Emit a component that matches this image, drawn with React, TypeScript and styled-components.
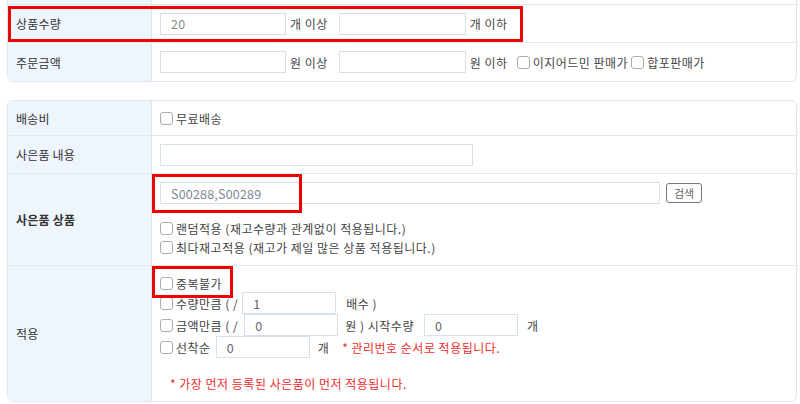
import React, { ReactElement, ReactNode } from 'react';
import styled, { createGlobalStyle } from 'styled-components';

const GlobalStyle = createGlobalStyle`
  html, body {
    margin: 0;
    padding: 0;
    background: #ffffff;
    font-family: "Noto Sans CJK KR", "Noto Sans", sans-serif;
    font-size: 12px;
    letter-spacing: 0.5px;
    color: #444444;
    overflow: hidden;
  }
`;

const Page = styled.div`
  margin-top: -34px;
  padding: 0 3px 0 7px;
  display: flex;
  flex-direction: column;
  gap: 18px;
`;

const Card = styled.div`
  border: 1px solid #e1e7ee;
  border-radius: 6px;
  overflow: hidden;
  background: #ffffff;
`;

const Row = styled.div<{ $h: number; $last?: boolean }>`
  position: relative;
  display: grid;
  grid-template-columns: 144px 1fr;
  min-height: ${({ $h }) => $h}px;
  border-bottom: ${({ $last }) => ($last ? 'none' : '1px solid #e3e8ee')};
`;

const Label = styled.div<{ $bold?: boolean }>`
  background: #eef5fd;
  border-right: 1px solid #dfe5ec;
  display: flex;
  align-items: center;
  padding-left: 8px;
  color: #333333;
  letter-spacing: 0.2px;
  font-weight: ${({ $bold }) => ($bold ? 700 : 400)};
`;

const Cell = styled.div`
  display: flex;
  align-items: center;
  padding-left: 8px;
`;

const Stack = styled.div<{ $pt: number; $pb: number }>`
  display: flex;
  flex-direction: column;
  justify-content: flex-start;
  padding: ${({ $pt, $pb }) => `${$pt}px 8px ${$pb}px 8px`};
`;

const Line = styled.div<{ $h: number; $mt?: number }>`
  display: flex;
  align-items: center;
  height: ${({ $h }) => $h}px;
  margin-top: ${({ $mt }) => $mt || 0}px;
  white-space: nowrap;
`;

const Input = styled.div<{ $w: number; $tone?: string }>`
  box-sizing: border-box;
  width: ${({ $w }) => $w}px;
  height: 22px;
  border: 1px solid #d6e0eb;
  background: #ffffff;
  padding-left: 10px;
  display: flex;
  align-items: center;
  color: ${({ $tone }) => $tone || '#888888'};
  font-size: 12.5px;
  letter-spacing: 0.2px;
  flex-shrink: 0;
`;

const Unit = styled.span<{ $l?: number; $r?: number }>`
  margin: 0 ${({ $r }) => $r ?? 0}px 0 ${({ $l }) => $l ?? 0}px;
  color: #444444;
`;

const Box = styled.span`
  box-sizing: border-box;
  width: 13px;
  height: 13px;
  border: 1px solid #ababab;
  border-radius: 3px;
  background: #ffffff;
  margin-right: 3px;
  flex-shrink: 0;
`;

const SearchButton = styled.button`
  box-sizing: border-box;
  height: 20px;
  width: 36px;
  margin-left: 6px;
  border: 1px solid #7a7a7a;
  border-radius: 3px;
  background: #ffffff;
  color: #666666;
  font-family: inherit;
  font-size: 11px;
  padding: 0;
`;

const Notice = styled.span<{ $l?: number }>`
  color: #f02b2b;
  margin-left: ${({ $l }) => $l ?? 0}px;
`;

const Highlight = styled.div<{ $l: number; $t: number; $w: number; $h: number }>`
  position: absolute;
  left: ${({ $l }) => $l}px;
  top: ${({ $t }) => $t}px;
  width: ${({ $w }) => $w}px;
  height: ${({ $h }) => $h}px;
  box-sizing: border-box;
  border: 3px solid #ee0000;
  pointer-events: none;
`;

const Check = ({ children }: { children: ReactNode }): ReactElement => (
  <>
    <Box />
    <span>{children}</span>
  </>
);

const App = (): ReactElement => (
  <>
    <GlobalStyle />
    <Page>
      <Card>
        <Row $h={37}>
          <Label />
          <Cell />
        </Row>
        <Row $h={37}>
          <Label>상품수량</Label>
          <Cell>
            <Input $w={126}>20</Input>
            <Unit $l={4} $r={11}>개 이상</Unit>
            <Input $w={127} />
            <Unit $l={4}>개 이하</Unit>
          </Cell>
          <Highlight $l={0} $t={1} $w={515} $h={36} />
        </Row>
        <Row $h={38} $last>
          <Label>주문금액</Label>
          <Cell>
            <Input $w={126} />
            <Unit $l={4} $r={11}>원 이상</Unit>
            <Input $w={127} />
            <Unit $l={4} $r={9}>원 이하</Unit>
            <Check>이지어드민 판매가</Check>
            <Unit $r={3} />
            <Check>합포판매가</Check>
          </Cell>
        </Row>
      </Card>

      <Card>
        <Row $h={34}>
          <Label>배송비</Label>
          <Cell>
            <Check>무료배송</Check>
          </Cell>
        </Row>
        <Row $h={37}>
          <Label>사은품 내용</Label>
          <Cell>
            <Input $w={313} />
          </Cell>
        </Row>
        <Row $h={91}>
          <Label $bold>사은품 상품</Label>
          <Stack $pt={8} $pb={8}>
            <Line $h={22}>
              <Input $w={500} $tone="#7b8797">S00288,S00289</Input>
              <SearchButton>검색</SearchButton>
            </Line>
            <Line $h={19} $mt={15}>
              <Check>랜덤적용 (재고수량과 관계없이 적용됩니다.)</Check>
            </Line>
            <Line $h={19}>
              <Check>최다재고적용 (재고가 제일 많은 상품 적용됩니다.)</Check>
            </Line>
          </Stack>
          <Highlight $l={144} $t={0} $w={150} $h={39} />
        </Row>
        <Row $h={135} $last>
          <Label>적용</Label>
          <Stack $pt={8} $pb={9}>
            <Line $h={18}>
              <Check>중복불가</Check>
            </Line>
            <Line $h={22}>
              <Check>수량만큼 ( /</Check>
              <Unit $r={4} />
              <Input $w={94} $tone="#666666">1</Input>
              <Unit $l={10}>배수 )</Unit>
            </Line>
            <Line $h={22}>
              <Check>금액만큼 ( /</Check>
              <Unit $r={6} />
              <Input $w={94} $tone="#666666">0</Input>
              <Unit $l={7} $r={10}>원 ) 시작수량</Unit>
              <Input $w={94} $tone="#666666">0</Input>
              <Unit $l={9}>개</Unit>
            </Line>
            <Line $h={22}>
              <Check>선착순</Check>
              <Unit $r={5} />
              <Input $w={94} $tone="#666666">0</Input>
              <Unit $l={8}>개</Unit>
              <Notice $l={13}>* 관리번호 순서로 적용됩니다.</Notice>
            </Line>
            <Line $h={18} $mt={16}>
              <Notice $l={10}>* 가장 먼저 등록된 사은품이 먼저 적용됩니다.</Notice>
            </Line>
          </Stack>
          <Highlight $l={144} $t={0} $w={81} $h={32} />
        </Row>
      </Card>
    </Page>
  </>
);

export default App;
